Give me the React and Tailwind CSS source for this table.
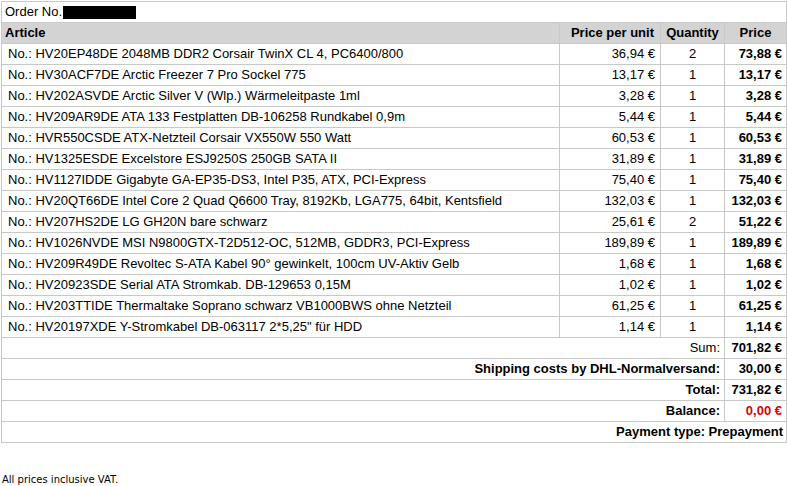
import React from "react";

const items = [
  ["HV20EP48DE 2048MB DDR2 Corsair TwinX CL 4, PC6400/800", "36,94 €", "2", "73,88 €"],
  ["HV30ACF7DE Arctic Freezer 7 Pro Sockel 775", "13,17 €", "1", "13,17 €"],
  ["HV202ASVDE Arctic Silver V (Wlp.) Wärmeleitpaste 1ml", "3,28 €", "1", "3,28 €"],
  ["HV209AR9DE ATA 133 Festplatten DB-106258 Rundkabel 0,9m", "5,44 €", "1", "5,44 €"],
  ["HVR550CSDE ATX-Netzteil Corsair VX550W 550 Watt", "60,53 €", "1", "60,53 €"],
  ["HV1325ESDE Excelstore ESJ9250S 250GB SATA II", "31,89 €", "1", "31,89 €"],
  ["HV1127IDDE Gigabyte GA-EP35-DS3, Intel P35, ATX, PCI-Express", "75,40 €", "1", "75,40 €"],
  ["HV20QT66DE Intel Core 2 Quad Q6600 Tray, 8192Kb, LGA775, 64bit, Kentsfield", "132,03 €", "1", "132,03 €"],
  ["HV207HS2DE LG GH20N bare schwarz", "25,61 €", "2", "51,22 €"],
  ["HV1026NVDE MSI N9800GTX-T2D512-OC, 512MB, GDDR3, PCI-Express", "189,89 €", "1", "189,89 €"],
  ["HV209R49DE Revoltec S-ATA Kabel 90° gewinkelt, 100cm UV-Aktiv Gelb", "1,68 €", "1", "1,68 €"],
  ["HV20923SDE Serial ATA Stromkab. DB-129653 0,15M", "1,02 €", "1", "1,02 €"],
  ["HV203TTIDE Thermaltake Soprano schwarz VB1000BWS ohne Netzteil", "61,25 €", "1", "61,25 €"],
  ["HV20197XDE Y-Stromkabel DB-063117 2*5,25\" für HDD", "1,14 €", "1", "1,14 €"],
];

const cell = "border border-[#c8c8c8] h-[21px] p-0 leading-[20px]";

export default function App() {
  return (
    <div className="w-[787px] h-[486px] bg-white text-black" style={{ fontFamily: '"Liberation Sans", Arial, sans-serif' }}>
      <div className="pt-px pl-px">
        <table className="border-collapse text-[13px] w-[785px] table-fixed">
          <colgroup>
            <col className="w-[558px]" />
            <col className="w-[101px]" />
            <col className="w-[64px]" />
            <col className="w-[62px]" />
          </colgroup>
          <tbody>
            <tr>
              <td colSpan={4} className={`${cell} pl-[3px]`}>
                <div className="flex items-center">
                  <span>Order No.</span>
                  <span className="inline-block ml-[1px] w-[73px] h-[13px] bg-black" />
                </div>
              </td>
            </tr>
            <tr className="bg-[#d3d3d3] font-bold">
              <td className={`${cell} pl-[3px]`}>Article</td>
              <td className={`${cell} text-right pr-[6px]`}>Price per unit</td>
              <td className={`${cell} text-center`}>Quantity</td>
              <td className={`${cell} text-center`}>Price</td>
            </tr>
            {items.map((it, i) => (
              <tr key={i}>
                <td className={`${cell} pl-[6px] whitespace-nowrap`}>No.: {it[0]}</td>
                <td className={`${cell} text-right pr-[5px]`}>{it[1]}</td>
                <td className={`${cell} text-center`}>{it[2]}</td>
                <td className={`${cell} text-right pr-[4px] font-bold`}>{it[3]}</td>
              </tr>
            ))}
            <tr>
              <td colSpan={3} className={`${cell} text-right pr-[4px]`}>Sum:</td>
              <td className={`${cell} text-right pr-[4px] font-bold`}>701,82 €</td>
            </tr>
            <tr className="font-bold">
              <td colSpan={3} className={`${cell} text-right pr-[4px]`}>Shipping costs by DHL-Normalversand:</td>
              <td className={`${cell} text-right pr-[4px]`}>30,00 €</td>
            </tr>
            <tr className="font-bold">
              <td colSpan={3} className={`${cell} text-right pr-[4px]`}>Total:</td>
              <td className={`${cell} text-right pr-[4px]`}>731,82 €</td>
            </tr>
            <tr className="font-bold">
              <td colSpan={3} className={`${cell} text-right pr-[4px]`}>Balance:</td>
              <td className={`${cell} text-right pr-[4px] text-[#e00000]`}>0,00 €</td>
            </tr>
            <tr className="font-bold">
              <td colSpan={4} className={`${cell} text-right pr-[3px]`}>Payment type: Prepayment</td>
            </tr>
          </tbody>
        </table>
      </div>
      <div className="mt-[29px] pl-[2px] text-[10px] text-black" style={{ fontFamily: '"DejaVu Sans", Verdana, sans-serif' }}>
        All prices inclusive VAT.
      </div>
    </div>
  );
}
